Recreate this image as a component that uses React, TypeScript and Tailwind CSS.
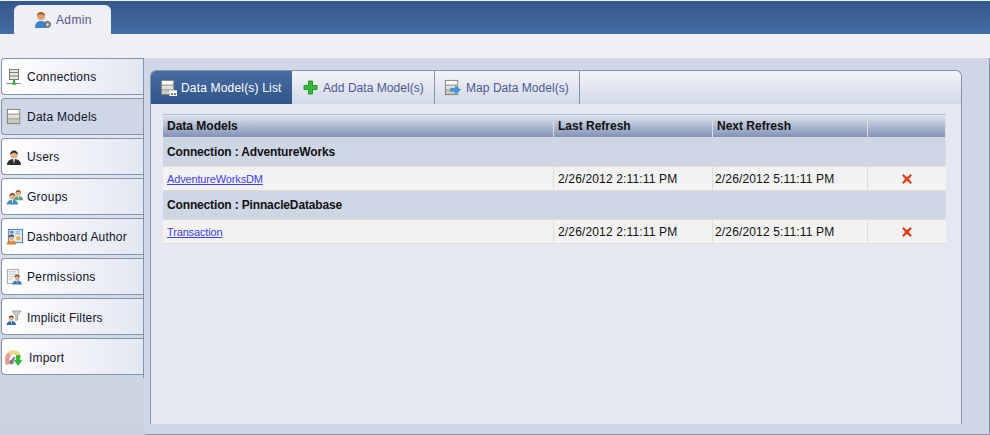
import React from "react";

const F = "font-['Liberation_Sans',Arial,sans-serif]";

function ServerStack({ badge }: { badge?: "dots" | "arrow" }) {
  return (
    <svg width="17" height="17" viewBox="0 0 18 18">
      <rect x="1.500" y="1.500" width="13" height="15" fill="#e9e9e6" stroke="#77786f" />
      <rect x="2" y="2" width="12" height="4" fill="#fbfbf8" />
      <rect x="2" y="7" width="12" height="4" fill="#e0e0da" />
      <rect x="2" y="12" width="12" height="4" fill="#c9c9c2" />
      <path d="M2 6.500h12M2 11.500h12" stroke="#8b8c84" />
      {badge === "dots" && (
        <>
          <rect x="10" y="12" width="8" height="6" fill="#ffffff" />
          <rect x="12" y="15" width="1.500" height="2" fill="#333" />
          <rect x="15" y="15" width="1.500" height="2" fill="#333" />
        </>
      )}
      {badge === "arrow" && <path d="M7 10h5V7.500l5.500 4-5.500 4V13H7z" fill="#3d9be0" stroke="#2a6fb0" strokeWidth="0.6" />}
    </svg>
  );
}

function Person({ x = 0, y = 0, hair = "#3a2a20", body = "#2f2f2f", s = 1 }: { x?: number; y?: number; hair?: string; body?: string; s?: number }) {
  return (
    <g transform={`translate(${x} ${y}) scale(${s})`}>
      <path d="M1 16c0-4 3-6 7-6s7 2 7 6z" fill={body} />
      <path d="M7 10h2l-1 5z" fill="#e8e8e8" />
      <circle cx="8" cy="6" r="3.600" fill="#e2b08c" />
      <path d="M4.300 6c-.4-3 1.600-4.600 3.700-4.600S12.100 3 11.700 6c-1-1.600-2.400-2.200-3.700-2.200S5.300 4.400 4.300 6z" fill={hair} />
    </g>
  );
}

const icons: Record<string, React.ReactNode> = {
  Connections: (
    <svg width="18" height="18" viewBox="0 0 18 18">
      <rect x="4.500" y="1.500" width="9" height="10" fill="#e6e8df" stroke="#7c7f76" />
      <path d="M5 4.500h8M5 8h8" stroke="#7c7f76" />
      <path d="M1 15.500h15" stroke="#8d9088" />
      <rect x="8" y="12" width="2" height="3" fill="#70756d" />
      <ellipse cx="9" cy="15.500" rx="2.500" ry="1.500" fill="#35c43b" />
    </svg>
  ),
  "Data Models": <ServerStack />,
  Users: (
    <svg width="16" height="16" viewBox="0 0 16 16">
      <Person />
    </svg>
  ),
  Groups: (
    <svg width="17" height="17" viewBox="0 0 18 18">
      <Person x={7} y={1} s={0.75} hair="#8a4a28" body="#5aa77f" />
      <Person x={0} y={4} s={0.85} hair="#6b4a2a" body="#4a8ec9" />
    </svg>
  ),
  "Dashboard Author": (
    <svg width="17" height="17" viewBox="0 0 18 18">
      <rect x="2.500" y="1.500" width="15" height="14" fill="#dfeaf7" stroke="#3f78c0" />
      <rect x="4" y="3" width="4" height="3" fill="#5b93d6" />
      <path d="M10 4h5M10 6h5" stroke="#7aa6dc" />
      <rect x="11" y="9" width="4" height="4" fill="#f2b33c" />
      <Person x={0} y={6} s={0.72} hair="#4a2d18" body="#e8792a" />
    </svg>
  ),
  Permissions: (
    <svg width="17" height="17" viewBox="0 0 18 18">
      <rect x="1.500" y="1.500" width="12" height="15" fill="#f7f5ec" stroke="#a4aab2" />
      <path d="M3 4h8M3 6.500h8M3 9h5M3 11.500h4" stroke="#b5c2cc" />
      <Person x={6} y={6} s={0.72} hair="#6b4a2a" body="#3e7fb8" />
    </svg>
  ),
  "Implicit Filters": (
    <svg width="16" height="16" viewBox="0 0 18 18">
      <path d="M7 1h10l-4 5.500V11l-2 1V6.500z" fill="#c9ccc8" stroke="#7f837f" strokeWidth="0.7" />
      <Person x={0} y={5} s={0.75} hair="#5a3c20" body="#2f6ea8" />
    </svg>
  ),
  Import: (
    <svg width="19" height="18" viewBox="0 0 22 20">
      <path d="M3 17C1 9 5 3 10 3s7.500 3 8 7" fill="none" stroke="#f0d78a" strokeWidth="5" />
      <path d="M3.500 18C2 13 2.500 8 5.500 5" fill="none" stroke="#e89a9a" strokeWidth="5" />
      <path d="M8 14l4-5" stroke="#666" strokeWidth="2" />
      <circle cx="8" cy="15" r="3" fill="#7d7d7d" />
      <path d="M14 7h4v6h2.500L16 19l-4.500-6H14z" fill="#28c22c" stroke="#178a1b" strokeWidth="0.7" />
    </svg>
  ),
};

const items: { label: string; kind: string; track: string }[] = [
  { label: "Connections", kind: "active", track: "tracking-[0.25px]" },
  { label: "Data Models", kind: "pressed", track: "tracking-[0.25px]" },
  { label: "Users", kind: "plain", track: "tracking-[0.25px]" },
  { label: "Groups", kind: "plain", track: "tracking-[0.25px]" },
  { label: "Dashboard Author", kind: "plain", track: "tracking-[0.2px]" },
  { label: "Permissions", kind: "plain", track: "tracking-[0.3px]" },
  { label: "Implicit Filters", kind: "plain", track: "tracking-[0.15px]" },
  { label: "Import", kind: "plain", track: "tracking-[0.2px]" },
];

function SideItem({ label, kind, track }: { label: string; kind: string; track: string }) {
  const bg = kind === "pressed" ? "bg-[#cfd6e5]" : "bg-gradient-to-r from-white to-[#e3e7f1]";
  const low = label === "Implicit Filters" || label === "Import";
  return (
    <div className={`flex h-[37px] w-[142px] items-center rounded-l-[4px] border-y border-l border-[#8294ac] pl-[3px] ${bg} ${low ? "pt-[2px]" : ""}`}>
      <span className="flex w-[18px] shrink-0 items-center justify-center">{icons[label]}</span>
      <span className={`${label === "Import" ? "ml-[6px]" : "ml-[4px]"} text-[12px] ${track} text-[#12122c]`}>{label}</span>
    </div>
  );
}

function Tab({ icon, label, active, w }: { icon: React.ReactNode; label: string; active?: boolean; w: string }) {
  return (
    <div
      className={`flex h-full items-center ${w} ${
        active
          ? "rounded-tl-[5px] bg-gradient-to-b from-[#476ea3] to-[#2f5488] tracking-[0.18px] text-white"
          : "border-r border-[#8294ac] tracking-[0.05px] text-[#4a5a96]"
      }`}
    >
      {icon}
      <span className="text-[12px]">{label}</span>
    </div>
  );
}

function HeadCell({ children, w, grow }: { children?: React.ReactNode; w?: string; grow?: boolean }) {
  return (
    <div className={`flex items-center border-r border-[#dfe1d8] pl-[4px] text-[12px] font-bold text-[#111] ${w ?? ""} ${grow ? "flex-1" : ""}`}>
      {children}
    </div>
  );
}

function DataRow({ name, h }: { name: string; h: string }) {
  return (
    <div className={`flex ${h} border-y border-[#dfdfd3] bg-[#f2f2f2] text-[12px] tracking-[0.15px] text-[#111]`}>
      <div className="flex w-[391px] items-center border-r border-[#dfdfd3] pl-[4px] pt-[2px]">
        <a className="text-[11px] tracking-[-0.15px] text-[#4040ee] underline">{name}</a>
      </div>
      <div className="flex w-[159px] items-center border-r border-[#dfdfd3] pl-[4px]">2/26/2012 2:11:11 PM</div>
      <div className="flex w-[155px] items-center border-r border-[#dfdfd3] pl-[2px]">2/26/2012 5:11:11 PM</div>
      <div className="flex flex-1 items-center justify-center">
        <svg width="10" height="10" viewBox="0 0 10 10">
          <path d="M0.500 1.500 1.500 0.500 5 3.500 8.500 0.500 9.500 1.500 6.500 5 9.500 8.500 8.500 9.500 5 6.500 1.500 9.500 0.500 8.500 3.500 5z" fill="#f03a12" stroke="#c72a0a" strokeWidth="0.6" />
        </svg>
      </div>
    </div>
  );
}

function GroupRow({ text, h }: { text: string; h: string }) {
  return (
    <div className={`flex items-center ${h} border-r border-[#dfdfd3] bg-[#ced5e5] pl-[4px] text-[12px] font-bold tracking-[-0.15px] text-[#111]`}>{text}</div>
  );
}

export default function App() {
  return (
    <div className={`${F} flex h-[435px] w-[990px] flex-col overflow-hidden bg-[#eef0f6]`}>
      <div className="mt-px flex h-[33px] shrink-0 items-end bg-gradient-to-b from-[#345888] to-[#456da6] pl-[14px]">
        <div className="flex h-[29px] w-[97px] items-center rounded-t-[6px] bg-[#eef0f6] pl-[20px]">
          <svg width="18" height="18" viewBox="0 0 18 18">
            <circle cx="7" cy="5" r="4" fill="#e0a070" />
            <path d="M3 5c0-3 2-4 4-4s4 1 4 4c-1-1-2-1.500-4-1.500S4 4 3 5z" fill="#a8672f" />
            <path d="M1 17c0-5 2-7 6-7s5 2 5 7z" fill="#3d84cf" />
            <circle cx="13.500" cy="13.500" r="3" fill="#8f969b" stroke="#55595c" />
            <circle cx="13.500" cy="13.500" r="1" fill="#eef0f6" />
          </svg>
          <span className="ml-[4px] text-[12px] tracking-[0.35px] text-[#56568f]">Admin</span>
        </div>
      </div>
      <div className="h-[24px] shrink-0" />
      <div className="flex min-h-0 flex-1">
        <div className="w-[144px] shrink-0 bg-gradient-to-b from-[#e9ecf3] via-[#d8dde7] to-[#c8d3dd]">
          <div className="flex h-[320px] flex-col gap-[3px] border-r border-[#8294ac] pl-px">
            {items.map((it) => (
              <SideItem key={it.label} label={it.label} kind={it.kind} track={it.track} />
            ))}
          </div>
        </div>
        <div className="flex min-w-0 flex-1 flex-col rounded-bl-[2px] border-b border-r border-[#8294ac] bg-[#d0d6e6] pb-[10px] pl-[6px] pr-[27px] pt-[12px]">
          <div className="flex flex-1 flex-col rounded-t-[6px] border-x border-t border-[#8294ac] bg-[#e5e8f2]">
            <div className="flex h-[33px] shrink-0 rounded-t-[6px] bg-gradient-to-b from-[#f3f4f9] to-[#d2d8e7]">
              <Tab active w="w-[141px] pl-[9px] gap-[4px]" label="Data Model(s) List" icon={<ServerStack badge="dots" />} />
              <Tab
                w="w-[143px] pl-[11px] gap-[5px]"
                label="Add Data Model(s)"
                icon={
                  <svg width="15" height="15" viewBox="0 0 15 15">
                    <path d="M5.500 1h4v4.500H14v4H9.500V14h-4V9.500H1v-4h4.500z" fill="#35b93a" stroke="#239a29" />
                  </svg>
                }
              />
              <Tab w="w-[145px] pl-[9px] gap-[5px]" label="Map Data Model(s)" icon={<ServerStack badge="arrow" />} />
            </div>
            <div className="ml-[12px] mr-[15px] mt-[10px] flex flex-col">
              <div className="flex h-[23px] border-t border-[#b2c4d2] bg-gradient-to-b from-[#dfe3ed] to-[#8293b6]">
                <HeadCell w="w-[391px]">Data Models</HeadCell>
                <HeadCell w="w-[159px]">Last Refresh</HeadCell>
                <HeadCell w="w-[155px]">Next Refresh</HeadCell>
                <HeadCell grow />
              </div>
              <GroupRow text="Connection : AdventureWorks" h="h-[29px]" />
              <DataRow name="AdventureWorksDM" h="h-[25px]" />
              <GroupRow text="Connection : PinnacleDatabase" h="h-[28px]" />
              <DataRow name="Transaction" h="h-[25px]" />
            </div>
          </div>
        </div>
      </div>
    </div>
  );
}
